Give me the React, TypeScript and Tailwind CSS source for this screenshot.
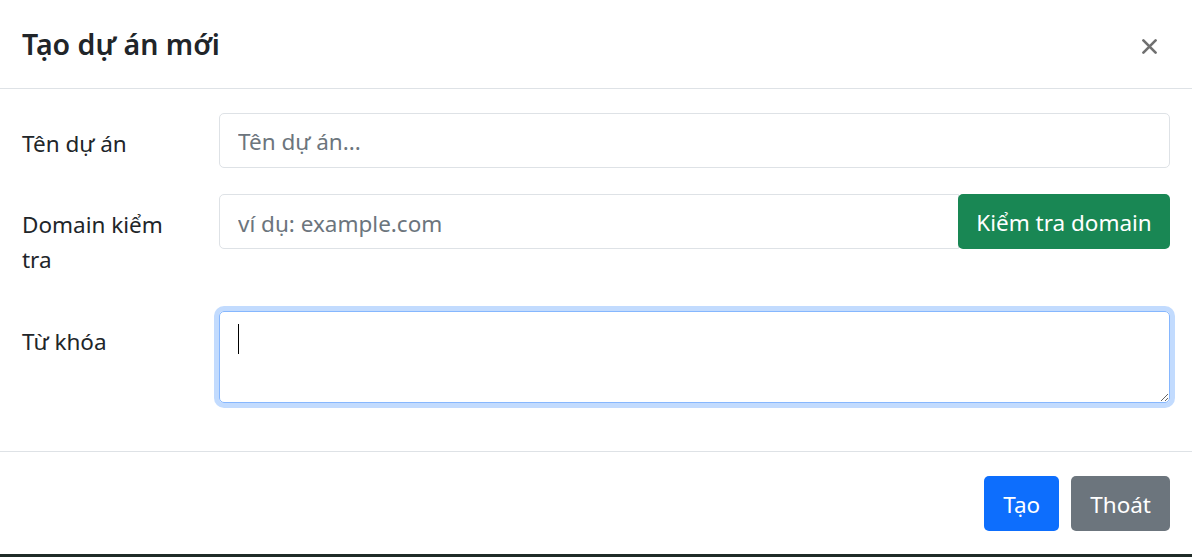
const font = { fontFamily: '"Noto Sans", "Open Sans", sans-serif' }

export default function App() {
    return (
        <div className="w-[1195px] h-[557px] bg-white overflow-hidden flex flex-col" style={font}>
            <div className="w-[1192px] flex-1 bg-white rounded-b-[8px] flex flex-col text-[#212529]">
                {/* header */}
                <div className="h-[89px] px-[22px] flex items-center justify-between border-b border-[#dee2e6]">
                    <h5 className="text-[28.5px] leading-[43px] font-semibold">Tạo dự án mới</h5>
                    <button className="w-[34px] h-[34px] mt-[4px] flex items-center justify-center text-[#707070] mr-[4px]">
                        <svg viewBox="0 0 16 16" className="w-[15px] h-[15px]" stroke="currentColor" strokeWidth="2.8" strokeLinecap="round">
                            <path d="M1.5 1.5l13 13M14.5 1.5l-13 13" />
                        </svg>
                    </button>
                </div>

                {/* body */}
                <div className="px-[22px] pt-[24px] pb-[23px] flex flex-col gap-[26px] text-[22.5px] leading-[35px]">
                    <div className="flex gap-[35px]">
                        <label className="w-[162px] shrink-0 pt-[13px]">Tên dự án</label>
                        <input
                            className="flex-1 h-[55px] px-[18px] pt-[2px] border border-[#dee2e6] rounded-[5px] outline-none placeholder:text-[#6c757d]"
                            placeholder="Tên dự án..."
                        />
                    </div>

                    <div className="flex gap-[35px]">
                        <label className="w-[162px] shrink-0 pt-[13px] pb-[9px]">Domain kiểm tra</label>
                        <div className="flex-1 flex h-[55px]">
                            <input
                                className="flex-1 px-[18px] pt-[3px] border border-[#dee2e6] rounded-l-[5px] outline-none placeholder:text-[#6c757d]"
                                placeholder="ví dụ: example.com"
                            />
                            <button className="w-[212px] pt-[2px] bg-[#198754] text-white rounded-[5px] -ml-px">Kiểm tra domain</button>
                        </div>
                    </div>

                    <div className="flex gap-[35px]">
                        <label className="w-[162px] shrink-0 pt-[12px]">Từ khóa</label>
                        <div className="flex-1 relative -mt-px">
                            <textarea
                                className="block w-full h-[92px] px-[18px] py-[9px] border border-[#86b7fe] rounded-[5px] outline-none shadow-[0_0_0_5px_rgba(13,110,253,0.25)] resize-y"
                            />
                            <span className="absolute left-[19px] top-[13px] w-px h-[30px] bg-black" />
                        </div>
                    </div>
                </div>

                {/* footer */}
                <div className="mt-auto border-t border-[#dee2e6] px-[22px] pt-[24px] pb-[23px] flex justify-end gap-[12px] text-[22.5px]">
                    <button className="h-[55px] px-[19px] pt-[2px] bg-[#0d6efd] text-white rounded-[5px]">Tạo</button>
                    <button className="h-[55px] px-[19px] pt-[2px] bg-[#6c757d] text-white rounded-[5px]">Thoát</button>
                </div>
            </div>
            <div className="h-[3px] w-[1192px] bg-[#1f2b27]" />
        </div>
    )
}
